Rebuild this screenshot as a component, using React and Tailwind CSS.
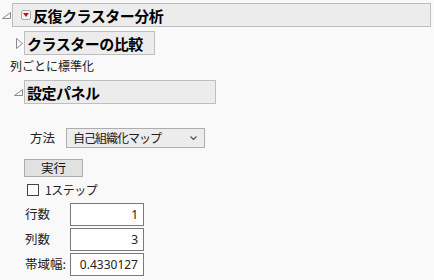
import React from 'react';

const font = { fontFamily: '"Noto Sans CJK JP", "Noto Sans", sans-serif' };

function OpenTri() {
  return (
    <svg width="9" height="7" viewBox="0 0 9 7" className="block">
      <path d="M0.5 6.5 L8.5 6.5 L8.5 0.5 Z" fill="none" stroke="#8a8a8a" strokeWidth="1" />
    </svg>
  );
}

function ClosedTri() {
  return (
    <svg width="7" height="11" viewBox="0 0 7 11" className="block">
      <path d="M0.5 0.5 L6.5 5.5 L0.5 10.5 Z" fill="none" stroke="#8a8a8a" strokeWidth="1" />
    </svg>
  );
}

function NumField({ label, value }) {
  return (
    <div className="flex items-center h-[23px]">
      <span className="w-[45px] whitespace-nowrap text-[12.5px] text-[#222]">{label}</span>
      <div className="w-[74px] h-[23px] border border-[#7a7a7a] bg-white flex items-center justify-end pr-[5px] text-[12px] text-[#222]" style={{ fontFamily: '"Noto Sans", sans-serif' }}>
        {value}
      </div>
    </div>
  );
}

export default function App() {
  return (
    <div className="w-[434px] h-[280px] bg-[#f9f9f9] overflow-hidden" style={font}>
      <div className="flex items-center pt-[3px]">
        <div className="w-[12px] pl-[2px]"><OpenTri /></div>
        <div className="w-[419px] h-[24px] bg-[#ececec] border border-[#bebebe] flex items-center">
          <div className="ml-[8px] w-[10px] h-[10px] bg-[#f4f4f4] border border-[#a8a8a8] rounded-[2px] flex items-center justify-center">
            <svg width="6" height="4" viewBox="0 0 6 4"><path d="M0 0 L6 0 L3 4 Z" fill="#d0101a" /></svg>
          </div>
          <span className="ml-[2px] whitespace-nowrap text-[15px] tracking-[-0.5px] font-bold text-black leading-none">反復クラスター分析</span>
        </div>
      </div>

      <div className="flex items-center mt-[4px]">
        <div className="w-[24px] pl-[16px]"><ClosedTri /></div>
        <div className="w-[131px] h-[24px] bg-[#ececec] border border-[#bebebe] flex items-center">
          <span className="ml-[2px] whitespace-nowrap text-[15px] tracking-[-0.5px] font-bold text-black leading-none">クラスターの比較</span>
        </div>
      </div>

      <div className="pl-[10px] mt-[3px] whitespace-nowrap text-[12px] leading-[16px] text-[#222]">列ごとに標準化</div>

      <div className="flex items-center mt-[6px]">
        <div className="w-[24px] pl-[14px]"><OpenTri /></div>
        <div className="w-[192px] h-[24px] bg-[#ececec] border border-[#bebebe] flex items-center">
          <span className="ml-[2px] whitespace-nowrap text-[15px] tracking-[-0.5px] font-bold text-black leading-none">設定パネル</span>
        </div>
      </div>

      <div className="flex items-center mt-[24px] pl-[30px] h-[20px]">
        <span className="w-[36px] whitespace-nowrap text-[12.5px] text-[#222]">方法</span>
        <div className="w-[139px] h-[20px] bg-[#ececec] border border-[#adadad] flex items-center justify-between pl-[6px] pr-[7px]">
          <span className="whitespace-nowrap text-[12px] tracking-[-1px] text-[#222]">自己組織化マップ</span>
          <svg width="7" height="4" viewBox="0 0 7 4"><path d="M0.5 0.5 L3.5 3.5 L6.5 0.5" fill="none" stroke="#555" strokeWidth="1.2" /></svg>
        </div>
      </div>

      <div className="pl-[24px] mt-[11px]">
        <div className="w-[59px] h-[18px] bg-[#e1e1e1] border border-[#adadad] flex items-center justify-center text-[12.5px] text-[#111]">実行</div>
      </div>

      <div className="flex items-center pl-[27px] mt-[7px] h-[12px]">
        <div className="w-[12px] h-[12px] bg-white border border-[#444]" />
        <span className="ml-[6px] whitespace-nowrap text-[12px] tracking-[-0.5px] text-[#222]">1ステップ</span>
      </div>

      <div className="pl-[25px] mt-[7px] flex flex-col gap-[2px]">
        <NumField label="行数" value="1" />
        <NumField label="列数" value="3" />
        <NumField label="帯域幅:" value="0.4330127" />
      </div>
    </div>
  );
}
